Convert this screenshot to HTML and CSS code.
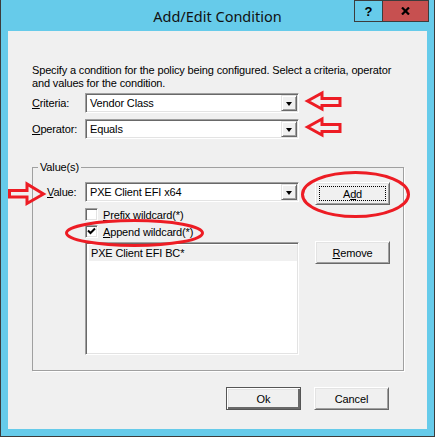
FILE: index.html
```html
<!DOCTYPE html>
<html lang="en">
<head>
    <meta charset="UTF-8">
    <title>Add/Edit Condition</title>
    <link rel="stylesheet" href="styles.css">
</head>
<body>
    <div class="window">
        <div class="titlebar">
            <div></div>
            <div class="title">Add/Edit Condition</div>
            <div class="caption-btns">
                <div class="cap-btn help">?</div>
                <div class="cap-btn close">
                    <svg width="9" height="8" viewBox="0 0 9 8"><path d="M1 0.5 L8 7.5 M8 0.5 L1 7.5" stroke="#000" stroke-width="2.2" fill="none"/></svg>
                </div>
            </div>
        </div>

        <div class="client">
            <p class="desc">Specify a condition for the policy being configured. Select a criteria, operator<br>and values for the condition.</p>

            <div class="field-row">
                <label class="field-label"><u>C</u>riteria:</label>
                <div class="combo"><span class="combo-text">Vendor Class</span><span class="drop-btn"></span></div>
            </div>
            <div class="field-row">
                <label class="field-label"><u>O</u>perator:</label>
                <div class="combo"><span class="combo-text">Equals</span><span class="drop-btn"></span></div>
            </div>

            <fieldset class="group">
                <legend>Value(s)</legend>
                <div class="group-body">
                    <label class="value-label"><u>V</u>alue:</label>
                    <div class="value-main">
                        <div class="combo"><span class="combo-text">PXE Client EFI x64</span><span class="drop-btn"></span></div>
                        <div class="check-row first">
                            <span class="checkbox"></span>
                            <span><u>P</u>refix wildcard(*)</span>
                        </div>
                        <div class="check-row">
                            <span class="checkbox">
                                <svg width="9" height="9" viewBox="0 0 9 9"><path d="M1 3.5 L3.5 6 L8 1.5" stroke="#000" stroke-width="2" fill="none"/></svg>
                            </span>
                            <span><u>A</u>ppend wildcard(*)</span>
                        </div>
                        <div class="listbox">
                            <div class="list-item selected">PXE Client EFI BC*</div>
                        </div>
                    </div>
                    <div class="value-buttons">
                        <button class="btn focused"><span class="focus-ring">A<u>d</u>d</span></button>
                        <button class="btn remove-btn"><u>R</u>emove</button>
                    </div>
                </div>
            </fieldset>

            <div class="footer">
                <button class="btn default">Ok</button>
                <button class="btn">Cancel</button>
            </div>
        </div>

        <!-- red markup drawn over the dialog -->
        <svg class="annotations" width="435" height="437" viewBox="0 0 435 437">
            <g fill="none" stroke="#ed1c24" stroke-width="3" stroke-linejoin="miter">
                <polygon points="307.5,101 322,93 322,98.5 340,98.5 340,105.5 322,105.5 322,109"/>
                <polygon points="307.5,127 322,119 322,124.5 340,124.5 340,131.5 322,131.5 322,135"/>
                <polygon points="9.5,190.5 27,190.5 27,184 43.5,194 27,203.5 27,197 9.5,197"/>
                <ellipse cx="355.5" cy="194.5" rx="53" ry="22"/>
                <ellipse cx="134.5" cy="233" rx="68" ry="12.5"/>
            </g>
        </svg>
    </div>
</body>
</html>
```

FILE: styles.css
```css
body {
    margin: 0;
    font-family: "Liberation Sans", Arial, sans-serif;
    font-size: 11px;
    letter-spacing: -0.15px;
    color: #000;
}
.window {
    position: relative;
    width: 435px;
    height: 437px;
    box-sizing: border-box;
    background: #66cbea;
    border: 1px solid #3c3c3c;
    border-top: none;
}
.titlebar {
    display: grid;
    grid-template-columns: 1fr auto 1fr;
    height: 31px;
}
.title {
    font-family: "Noto Sans", "Open Sans", sans-serif;
    font-size: 14.5px;
    letter-spacing: 0;
    line-height: 20px;
    padding-top: 6px;
    color: #111;
}
.caption-btns {
    justify-self: end;
    display: flex;
    margin-right: 5px;
    height: 22px;
}
.cap-btn {
    box-sizing: border-box;
    height: 22px;
    border: 1px solid #3c3c3c;
    display: flex;
    align-items: center;
    justify-content: center;
}
.help {
    width: 29px;
    font-weight: bold;
    font-size: 13px;
    letter-spacing: 0;
}
.close {
    width: 46px;
    border-left: none;
    background: #c75050;
}
.client {
    margin: 0 7px;
    height: 398px;
    box-sizing: border-box;
    background: #f0f0f0;
    padding: 33px 23px 0 24px;
}
.desc {
    margin: 0;
    line-height: 13px;
}
.field-row {
    display: flex;
    align-items: center;
    margin-top: 3px;
}
.field-row + .field-row {
    margin-top: 6px;
}
.field-label {
    width: 53px;
}
.combo {
    box-sizing: border-box;
    width: 214px;
    height: 20px;
    display: flex;
    align-items: center;
    background: #fff;
    border: 1px solid;
    border-color: #a0a0a0 #fff #fff #a0a0a0;
    box-shadow: inset 1px 1px #696969, inset -1px -1px #e3e3e3;
    padding: 1px;
}
.combo-text {
    flex: 1;
    padding-left: 3px;
}
.drop-btn {
    box-sizing: border-box;
    width: 16px;
    height: 16px;
    background: #f0f0f0;
    border: 1px solid;
    border-color: #e3e3e3 #696969 #696969 #e3e3e3;
    box-shadow: inset 1px 1px #fff, inset -1px -1px #a0a0a0;
    display: flex;
    align-items: center;
    justify-content: center;
}
.drop-btn::after {
    content: "";
    border-left: 3.5px solid transparent;
    border-right: 3.5px solid transparent;
    border-top: 4px solid #000;
    margin-top: 1px;
}
.group {
    margin: 22px 0 0;
    padding: 8px 12px 15px 14px;
    border: 1px solid #a0a0a0;
    box-shadow: 1px 1px 0 #fff;
    min-width: 0;
}
.group legend {
    padding: 0 2px;
    margin-left: -9px;
    line-height: 13px;
}
.group-body {
    display: flex;
    align-items: flex-start;
}
.value-label {
    width: 38px;
    line-height: 20px;
}
.value-main {
    width: 214px;
    display: flex;
    flex-direction: column;
}
.check-row {
    display: flex;
    align-items: center;
    height: 17px;
    gap: 5px;
}
.check-row.first {
    margin-top: 4px;
}
.checkbox {
    box-sizing: border-box;
    width: 13px;
    height: 13px;
    background: #fff;
    border: 1px solid;
    border-color: #a0a0a0 #fff #fff #a0a0a0;
    box-shadow: inset 1px 1px #696969, inset -1px -1px #e3e3e3;
    display: flex;
    align-items: center;
    justify-content: center;
}
.listbox {
    box-sizing: border-box;
    margin-top: 2px;
    height: 113px;
    background: #fff;
    border: 1px solid;
    border-color: #a0a0a0 #fff #fff #a0a0a0;
    box-shadow: inset 1px 1px #696969, inset -1px -1px #e3e3e3;
    padding: 2px 1px 0 3px;
}
.list-item {
    height: 16px;
    line-height: 16px;
    padding-left: 2px;
}
.list-item.selected {
    background: #f0f0f0;
}
.value-buttons {
    margin-left: 16px;
    display: flex;
    flex-direction: column;
}
.btn {
    box-sizing: border-box;
    width: 75px;
    height: 23px;
    padding: 0;
    font-family: inherit;
    font-size: 11px;
    letter-spacing: -0.15px;
    color: #000;
    background: #f0f0f0;
    border: 1px solid;
    border-color: #fff #696969 #696969 #fff;
    box-shadow: inset 1px 1px #e3e3e3, inset -1px -1px #a0a0a0;
}
.btn.focused {
    padding: 3px;
}
.focus-ring {
    display: flex;
    height: 100%;
    align-items: center;
    justify-content: center;
    border: 1px dotted #000;
    box-sizing: border-box;
}
.remove-btn {
    margin-top: 36px;
}
.footer {
    display: flex;
    justify-content: flex-end;
    gap: 13px;
    margin-top: 16px;
    padding-right: 15px;
}
.btn.default {
    border: 1px solid #555;
    box-shadow: inset 1px 1px #fff, inset -2px -2px #696969, inset 2px 2px #e3e3e3;
}
.annotations {
    position: absolute;
    top: 0;
    left: -1px;
    pointer-events: none;
}
```
